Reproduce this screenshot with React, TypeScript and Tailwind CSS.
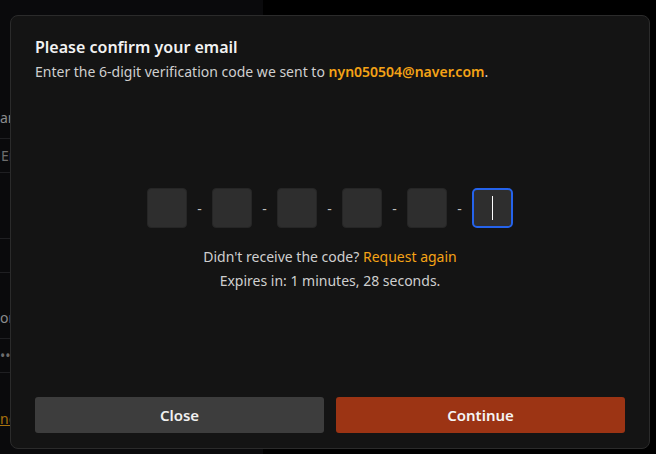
import React from "react";

const font = { fontFamily: "'Noto Sans', Lato, sans-serif" };

function Background() {
  return (
    <div className="flex h-[454px] w-[656px] bg-black">
      <div className="relative h-full w-[263px] overflow-hidden bg-[#0a0a0c] text-[#8c8c8c]">
        <div className="flex w-[240px] flex-col pt-[108px] text-[14px]">
          <div className="h-[20px] leading-[20px]">any name</div>
          <div className="mt-[10px] flex h-[35px] items-center border-y border-[#1f1f22] pl-[1px] text-[#6d6d6d]">Enter email</div>
          <div className="h-[65px]" />
          <div className="h-[35px] border-y border-[#1f1f22]" />
          <div className="mt-[35px] h-[20px] leading-[20px]">on password</div>
          <div className="mt-[10px] flex h-[35px] items-center border-y border-[#1f1f22] text-[#6d6d6d]">••••••••</div>
          <div className="mt-[36px] h-[20px] leading-[20px] text-[#a8720e] underline">nce</div>
        </div>
      </div>
      <div className="flex-1 bg-black" />
    </div>
  );
}

function CodeBox({ active }: { active?: boolean }) {
  return (
    <div
      className={
        active
          ? "flex h-[40px] w-[41px] items-center justify-center rounded-[5px] border-2 border-[#2563eb] bg-[#2e2e2e]"
          : "h-[40px] w-[40px] rounded-[4px] border border-[#262626] bg-[#2e2e2e]"
      }
    >
      {active && <div className="h-[24px] w-[1.5px] bg-white" />}
    </div>
  );
}

export default function App() {
  return (
    <div className="relative h-[454px] w-[656px] overflow-hidden" style={font}>
      <Background />
      <div className="absolute left-[10px] top-[15px] flex h-[434px] w-[640px] flex-col rounded-[8px] border border-[#2b2b2b] bg-[#141414] px-[24px] pb-[15px] pt-[20px]">
        <div className="text-[16px] font-semibold leading-[22px] text-[#f2f2f2]">Please confirm your email</div>
        <div className="mt-[4px] text-[14px] leading-[20px] text-[#cfcfcf]">
          Enter the 6-digit verification code we sent to{" "}
          <span className="font-semibold text-[#f5a316]">nyn050504@naver.com</span>.
        </div>
        <div className="mt-[106px] flex items-center justify-center">
          {[0, 1, 2, 3, 4].map((i) => (
            <React.Fragment key={i}>
              <CodeBox />
              <div className="w-[25px] text-center text-[14px] text-[#bdbdbd]">-</div>
            </React.Fragment>
          ))}
          <CodeBox active />
        </div>
        <div className="mt-[18px] text-center text-[14px] leading-[22px] text-[#cfcfcf]">
          Didn't receive the code? <span className="text-[#f5a316]">Request again</span>
        </div>
        <div className="mt-[2px] text-center text-[14px] leading-[22px] text-[#cfcfcf]">
          Expires in: 1 minutes, 28 seconds.
        </div>
        <div className="mt-auto flex gap-[12px]">
          <button className="h-[36px] flex-1 rounded-[3px] bg-[#3d3d3d] text-[15px] font-semibold text-[#f0f0f0]">Close</button>
          <button className="h-[36px] flex-1 rounded-[3px] bg-[#9c3414] text-[15px] font-semibold text-[#f5f5f5]">Continue</button>
        </div>
      </div>
    </div>
  );
}
